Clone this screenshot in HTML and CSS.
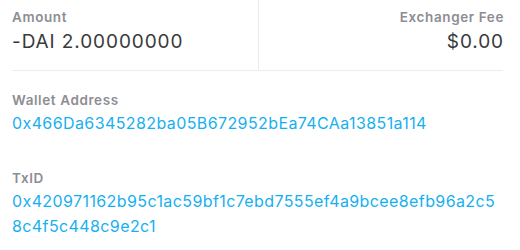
FILE: index.html
```html
<!DOCTYPE html>
<html lang="en">
<head>
  <meta charset="UTF-8" />
  <title>Transaction details</title>
  <link rel="stylesheet" href="styles.css">
</head>
<body>
  <div class="summary">
    <div class="cell">
      <div class="label">Amount</div>
      <div class="value">-DAI 2.00000000</div>
    </div>
    <div class="cell right">
      <div class="label">Exchanger Fee</div>
      <div class="value">$0.00</div>
    </div>
  </div>

  <div class="field">
    <div class="label">Wallet Address</div>
    <div class="hash">0x466Da6345282ba05B672952bEa74CAa13851a114</div>
  </div>

  <div class="field txid">
    <div class="label">TxID</div>
    <div class="hash">0x420971162b95c1ac59bf1c7ebd7555ef4a9bcee8efb96a2c58c4f5c448c9e2c1</div>
  </div>
</body>
</html>
```
FILE: styles.css
```css
body { margin: 0; background: #fff; font-family: Inter, "Noto Sans", sans-serif; }
.summary { display: grid; grid-template-columns: 247px 244px; margin-left: 12px; width: 491px; }
.cell { height: 71px; border-bottom: 1px solid #ececec; padding-top: 9px; box-sizing: border-box; }
.cell:first-child { border-right: 1px solid #ececec; }
.right { text-align: right; }
.label { font-size: 13.5px; font-weight: 600; color: #8d8d93; line-height: 16px; letter-spacing: 0.6px; }
.value { font-size: 19px; color: #3a3a3a; line-height: 24px; margin-top: 5px; letter-spacing: 0.9px; }
.right .label, .right .value { margin-right: -1px; }
.field { padding: 21px 12px 0; width: 512px; box-sizing: border-box; }
.txid { padding-top: 34px; }
.hash { font-size: 16px; color: #17b0ef; line-height: 25px; margin-top: 3px; letter-spacing: 0.4px; word-break: break-all; }
```
